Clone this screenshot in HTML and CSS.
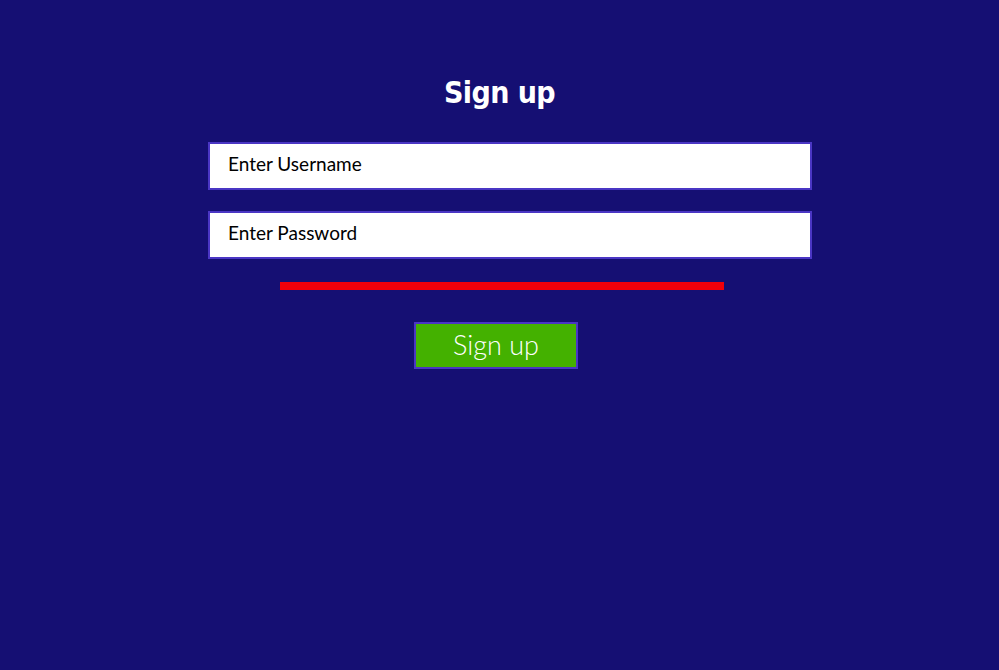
FILE: index.html
```html
<!DOCTYPE html>
<html>
<head>
<meta charset="utf-8">
<link rel="stylesheet" href="styles.css">
</head>
<body>
<div class="page">
  <h1 class="title">Sign up</h1>
  <form class="form">
    <input class="field" type="text" placeholder="Enter Username">
    <input class="field" type="password" placeholder="Enter Password">
    <div class="strength"></div>
    <button class="btn" type="button">Sign up</button>
  </form>
</div>
</body>
</html>
```
FILE: styles.css
```css
html, body {
  margin: 0;
  padding: 0;
  background: #150f73;
  height: 100%;
}
.page {
  display: flex;
  flex-direction: column;
  align-items: center;
  padding-top: 72px;
}
.title {
  margin: 0;
  height: 42px;
  line-height: 42px;
  font-family: "DejaVu Sans Condensed", "DejaVu Sans", sans-serif;
  font-weight: 700;
  font-size: 30px;
  color: #ffffff;
  letter-spacing: -0.6px;
}
.form {
  margin-top: 28px;
  width: 604px;
  margin-left: 21px;
  display: flex;
  flex-direction: column;
  align-items: center;
}
.field {
  box-sizing: border-box;
  width: 604px;
  height: 48px;
  border: 2px solid #4a36c4;
  background: #ffffff;
  padding: 0 18px 5px;
  font-family: "Lato", "Open Sans", sans-serif;
  font-size: 19px;
  color: #000;
  margin-bottom: 21px;
  outline: none;
}
.field::placeholder {
  color: #000000;
  opacity: 1;
}
.field + .field {
  margin-bottom: 23px;
}
.strength {
  width: 444px;
  height: 8px;
  background: #f0000a;
  margin-left: -16px;
}
.btn {
  margin-top: 32px;
  margin-left: -28px;
  box-sizing: border-box;
  width: 164px;
  height: 47px;
  background: #44b100;
  border: 2px solid #4a36c4;
  color: #ffffff;
  font-family: "Lato", "Open Sans", sans-serif;
  font-weight: 300;
  font-size: 27px;
  padding: 0 0 3px;
}
```
